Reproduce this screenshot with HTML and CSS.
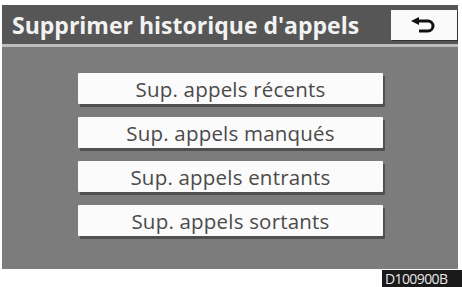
FILE: index.html
```html
<!DOCTYPE html>
<html>
<head>
<meta charset="utf-8">
<link rel="stylesheet" href="styles.css">
</head>
<body>
<div class="screen">
  <div class="titlebar">
    <div class="title">Supprimer historique d'appels</div>
    <div class="back">
      <svg width="30" height="16" viewBox="0 0 30 16">
        <path d="M9 4 H19 A5 5 0 0 1 19 14 H10" fill="none" stroke="#111" stroke-width="3"/>
        <path d="M2 4 L10 0 L10 8 Z" fill="#111"/>
      </svg>
    </div>
  </div>
  <div class="sep"></div>
  <div class="list">
    <div class="btn">Sup. appels récents</div>
    <div class="btn">Sup. appels manqués</div>
    <div class="btn">Sup. appels entrants</div>
    <div class="btn">Sup. appels sortants</div>
  </div>
</div>
<div class="footer"><span class="code">D100900B</span></div>
</body>
</html>
```
FILE: styles.css
```css
html, body {
  margin: 0;
  padding: 0;
  background: #ffffff;
}
body {
  width: 462px;
  height: 287px;
  overflow: hidden;
  font-family: "Open Sans", "Noto Sans", sans-serif;
}
.screen {
  margin: 5px 0 0 2px;
  width: 456px;
  height: 264px;
  background: #7c7c7c;
  display: flex;
  flex-direction: column;
}
.titlebar {
  height: 39px;
  background: #565656;
  display: flex;
  align-items: center;
  justify-content: space-between;
  padding: 0 1px 0 10px;
}
.title {
  color: #f2f2f2;
  font-weight: 700;
  font-size: 23px;
  letter-spacing: 0;
}
.back {
  width: 66px;
  height: 30px;
  background: #fafafa;
  display: flex;
  align-items: center;
  justify-content: center;
  box-shadow: 1px 1px 0 #333;
}
.sep {
  height: 3px;
  background: #bdbdbd;
}
.list {
  display: flex;
  flex-direction: column;
  gap: 13px;
  padding: 26px 0 0 76px;
}
.btn {
  width: 305px;
  height: 31px;
  background: #fbfbfb;
  box-shadow: 2px 3px 0 #505050;
  color: #4a4a4a;
  font-size: 20.5px;
  letter-spacing: 0.2px;
  display: flex;
  align-items: center;
  justify-content: center;
  border-radius: 1px;
}
.footer {
  display: flex;
  justify-content: flex-end;
  padding-top: 1px;
}
.code {
  width: 76px;
  padding: 0 1px 0 3px;
  white-space: nowrap;
  background: #1a1a1a;
  color: #e8e8e8;
  font-size: 14px;
  line-height: 17px;
  letter-spacing: -0.6px;
}
```
